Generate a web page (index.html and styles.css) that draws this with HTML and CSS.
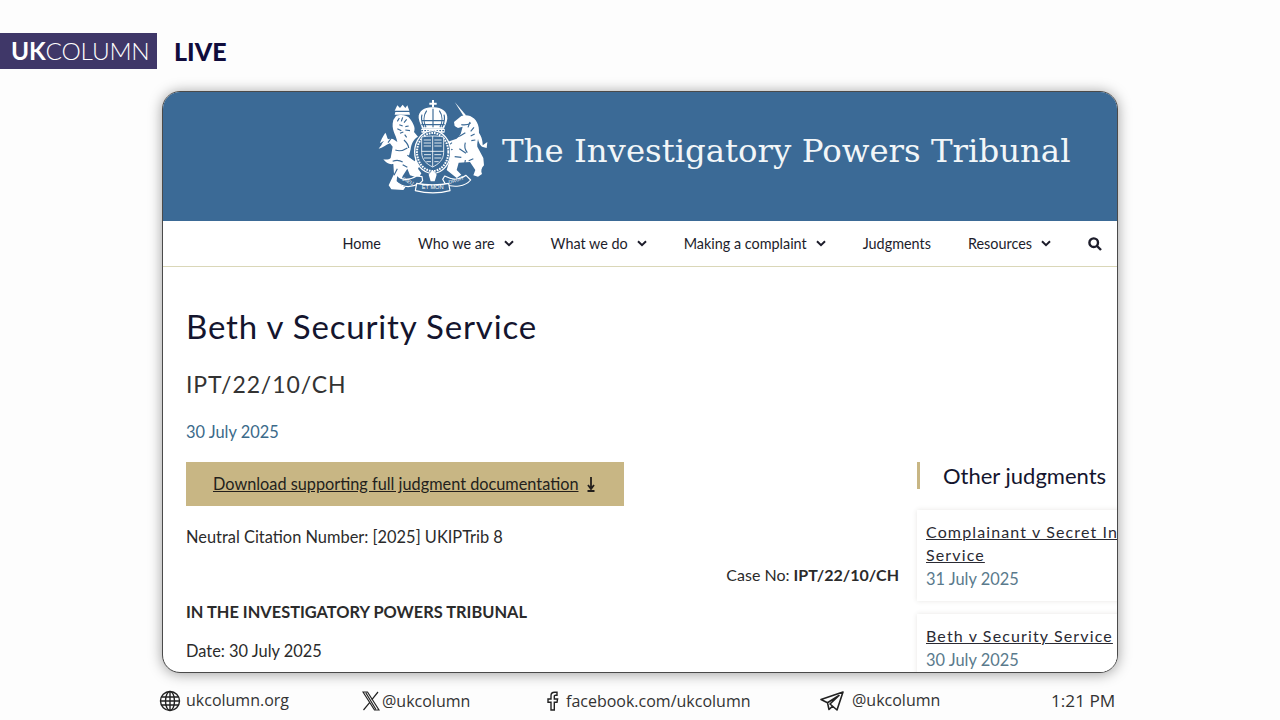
FILE: index.html
```html
<!DOCTYPE html>
<html lang="en">
<head>
<meta charset="utf-8">
<title>UK Column Live</title>
<link rel="stylesheet" href="styles.css">
</head>
<body>
<header class="brand">
  <div class="logo"><b>UK</b>COLUMN</div>
  <div class="live">LIVE</div>
</header>
<main class="window">
  <section class="banner">
    <svg class="crest" viewBox="0 0 450 330" aria-hidden="true">
      <g fill="#fff">
        <!-- lion -->
        <path d="M104 62l8-16 8 8 8-10 8 10 6-8 6 16zM106 66h42l2 8h-46z"/>
        <path d="M108 78c12-6 34-4 42 8 8 12 18 26 12 40l12 14c-14 8-20 22-22 38l-6 22 18 14 8-14 14 14-12 22 10 14-8 14-26-8-8-20-14 22-8 26 16 8-6 8-36-2-8-12 16-34-2-30c-14 2-22-4-30-14 10 2 18 0 22-4l6-34-8-10c-12 4-22 14-34 16 10-10 22-36 44-28l12 8c-4-24-20-36-12-66z"/>
        <path d="M76 128c-8 12-14 24-16 32l12-8-8 12 24-6-4-10c-4-8-4-14-8-20z"/>
        <!-- unicorn -->
        <path d="M284 36l34 40-6 4z"/>
        <path d="M304 78c24-8 48 8 52 34 4 24-6 42-4 58l18 34 2 22c-8 8-10 18-6 26l-12 8-14-4 6-16-16-24-34 2-6 22 14 14-14 10-30-24 10-34-10-18 20-10c-14-2-30-8-34-2l-10-6 10-14 22-2 22-8 12-14 6-22-14 4-10-6-2-12z"/>
        <path d="M352 124c12 10 16 28 16 42l14-10-2 18-14-4c-10-6-14-26-14-46z"/>
        <!-- crown -->
        <path d="M216 30h6v8h8v6h-8v8h-6v-8h-8v-6h8z"/>
        <path d="M176 84c-2-22 22-34 42-32 22-2 46 10 44 34-2 14-8 22-10 30h-66c-2-10-8-18-10-32z"/>
        <rect x="184" y="116" width="70" height="12" rx="2"/>
      </g>
      <g fill="none" stroke="#3b6a96" stroke-width="3.500">
        <path d="M219 56v56M200 62c-10 14-10 34-2 50M238 62c10 14 10 34 2 50M186 74c-4 12 0 26 6 38M252 74c4 12 0 26-6 38M184 92h70M184 104h70"/>
        <path d="M184 122h70" stroke-dasharray="5 4"/>
        <path d="M118 84l-6 10M128 82l-4 12M140 88l-8 10M118 104l10 4M112 116l12 6M146 108l-10 2M150 122l-14-2M120 130l10-4M134 134l6 8"/>
        <path d="M106 180c10 4 24 2 36-6M132 150c8 8 14 14 14 24M98 214c10-4 20-4 30 2M128 224l14 8M142 196l22 14M84 158l10-14M112 236l-10 20"/>
        <path d="M304 104c12 2 20 0 28-4M316 128c-12 8-24 16-38 16M322 188c-8-10-10-18-6-30M330 96l-6 16M342 112l-10 12M344 132l-12 6M346 150l-12 2M298 176l20 14M340 206l-14 6M284 200l20 2M316 210l-2 14M276 158l-10 8"/>
      </g>
      <!-- garter and shield -->
      <ellipse cx="218" cy="186" rx="54" ry="64" fill="#3b6a96" stroke="#fff" stroke-width="4"/>
      <ellipse cx="218" cy="186" rx="47" ry="57" fill="none" stroke="#fff" stroke-width="6" stroke-dasharray="5 3"/>
      <path d="M218 138c-18 0-33 3-33 3v46c0 24 17 36 33 44 16-8 33-20 33-44v-46s-15-3-33-3z" fill="#3b6a96" stroke="#fff" stroke-width="2.500"/>
      <g stroke="#fff" stroke-width="2.500" fill="none">
        <path d="M218 138v92M185 184h66"/>
        <path d="M191 150h22M191 159h22M191 168h22M223 150h22M223 159h22M223 168h22M192 194h21M192 204h21M199 215h14M223 194h21M223 204h21M223 215h13"/>
      </g>
      <!-- motto ribbons -->
      <g fill="#3b6a96" stroke="#fff" stroke-width="3.500" stroke-linejoin="round">
        <path d="M110 254c12 16 34 20 60 4l16 2 2 12-8 8c-28 14-52 14-72-6z"/>
        <path d="M254 258c30 16 48 10 64-2l14 14c-16 20-52 24-76 12l-8-14z"/>
        <path d="M170 280c28 6 70 6 96 0l4 22c-30 8-72 8-104 0z"/>
      </g>
      <path d="M206 254l12-14 12 14-6 20h-12z" fill="#fff"/>
      <g fill="#fff" font-family="'Liberation Sans', sans-serif" font-size="17">
        <text x="218" y="298" text-anchor="middle">ET MON</text>
        <text x="126" y="271" transform="rotate(24 126 271)" font-size="15">DIEU</text>
        <text x="268" y="282" transform="rotate(-18 268 282)" font-size="15">DROIT</text>
      </g>
    </svg>
    <div class="banner-title">The Investigatory Powers Tribunal</div>
  </section>
  <nav class="nav">
    <a>Home</a>
    <a>Who we are<svg class="chev" viewBox="0 0 10 7"><path d="M1 1.2l4 4 4-4"/></svg></a>
    <a>What we do<svg class="chev" viewBox="0 0 10 7"><path d="M1 1.2l4 4 4-4"/></svg></a>
    <a>Making a complaint<svg class="chev" viewBox="0 0 10 7"><path d="M1 1.2l4 4 4-4"/></svg></a>
    <a>Judgments</a>
    <a>Resources<svg class="chev" viewBox="0 0 10 7"><path d="M1 1.2l4 4 4-4"/></svg></a>
    <svg class="search" viewBox="0 0 14 14"><circle cx="5.7" cy="5.7" r="4.3"/><path d="M9 9l4 4"/></svg>
  </nav>
  <div class="content">
    <article class="main-col">
      <h1>Beth v Security Service</h1>
      <h2>IPT/22/10/CH</h2>
      <p class="date">30 July 2025</p>
      <a class="download"><span>Download supporting full judgment documentation</span><svg viewBox="0 0 10 16"><path d="M5 1v11M2 9l3 4 3-4M1.500 15h7"/></svg></a>
      <p class="citation">Neutral Citation Number: [2025] UKIPTrib 8</p>
      <p class="case">Case No: <b>IPT/22/10/CH</b></p>
      <p class="court"><b>IN THE INVESTIGATORY POWERS TRIBUNAL</b></p>
      <p class="judg-date">Date: 30 July 2025</p>
    </article>
    <aside class="side">
      <h3>Other judgments</h3>
      <div class="card">
        <a>Complainant v Secret Intelligence Service</a>
        <time>31 July 2025</time>
      </div>
      <div class="card">
        <a>Beth v Security Service</a>
        <time>30 July 2025</time>
      </div>
    </aside>
  </div>
</main>
<footer class="foot">
  <div class="item">
    <svg class="ico globe" viewBox="0 0 22 22"><circle cx="11" cy="11" r="9.500"/><ellipse cx="11" cy="11" rx="4.500" ry="9.500"/><path d="M11 1.500v19M2.500 7h17M2.500 15h17M1.500 11h19"/></svg>
    <span class="raised">ukcolumn.org</span>
  </div>
  <div class="item x">
    <svg class="ico xicon" viewBox="0 0 18 20"><path d="M1 1h4.500l11.500 18h-4.500zM3.800 1.800l10 16.400M16 1l-6.300 7.800M7.800 11.300L1.500 19"/></svg>
    <span>@ukcolumn</span>
  </div>
  <div class="item fb">
    <svg class="ico ficon" viewBox="0 0 14 20"><path d="M12 1.200H9.500C7.500 1.200 6 2.700 6 4.700V8H3v3.300h3V19h3.300v-7.700H12l.6-3.300H9.300V5.300c0-.6.500-1 1-1H12z"/></svg>
    <span>facebook.com/ukcolumn</span>
  </div>
  <div class="item tg">
    <svg class="ico ticon" viewBox="0 0 24 20"><path d="M23 1L1 8.500l6.500 3.200L19 4.500 10 13l7 6zM7.500 11.700L9 18.500l3.700-3.300"/></svg>
    <span class="raised">@ukcolumn</span>
  </div>
  <div class="time">1:21 PM</div>
</footer>
</body>
</html>
```
FILE: styles.css
```css
* { box-sizing: border-box; }
html, body { margin: 0; height: 720px; overflow: hidden; }
body { background: #fdfdfd; font-family: Lato, sans-serif; color: #2b2b2b; }

.brand { display: flex; align-items: center; height: 36px; margin-top: 33px; }
.logo { width: 157px; height: 36px; background: #3f3768; color: #fff; font-size: 24.400px; font-weight: 300; line-height: 36px; padding-left: 11px; letter-spacing: -.2px; white-space: nowrap; }
.logo b { font-weight: 700; }
.live { margin-left: 17px; font-size: 25px; font-weight: 900; color: #100c3c; }

.window { width: 956px; height: 582px; margin: 22px 0 0 162px; border: 1px solid #4a4a4a; border-radius: 18px; overflow: hidden; background: #fff; box-shadow: 0 1px 14px rgba(0, 0, 0, .38); }
.banner { height: 129px; background: #3b6a96; display: flex; align-items: center; padding-left: 197px; }
.crest { width: 150px; height: 110px; align-self: flex-start; margin-top: -2px; flex: none; }
.banner-title { margin: 0 0 12px -8px; font-family: "DejaVu Serif", serif; font-size: 32.400px; color: #f2f6f8; white-space: nowrap; }

.nav { height: 46px; border-bottom: 1px solid #dad7b8; display: flex; align-items: center; justify-content: flex-end; gap: 37px; padding-right: 15px; font-size: 14.400px; color: #1d1d2b; }
.nav a { display: flex; align-items: center; }
.chev { width: 10px; height: 7px; margin-left: 9px; fill: none; stroke: #1d1d2b; stroke-width: 2; }
.search { width: 14px; height: 14px; fill: none; stroke: #1d1d2b; stroke-width: 2.400; }

.content { display: grid; grid-template-columns: 713px 1fr; column-gap: 18px; padding-left: 23px; height: 406px; overflow: hidden; }
.main-col { padding-top: 37px; font-size: 16.400px; }
h1 { margin: 0; font-size: 33px; font-weight: 400; letter-spacing: .83px; line-height: 44px; color: #14152e; }
h2 { margin: 20px 0 0; font-size: 23px; font-weight: 400; letter-spacing: .9px; line-height: 32px; color: #333; }
.date { margin: 20px 0 0; line-height: 24px; color: #3b6a8a; }
.download { display: flex; align-items: center; width: 438px; height: 44px; margin-top: 18px; padding: 0 0 1px 27px; background: #c8b684; color: #231f1c; font-size: 16.300px; }
.download span { text-decoration: underline; }
.download svg { width: 10px; height: 16px; margin-left: 8px; fill: none; stroke: #231f1c; stroke-width: 1.800; }
.citation { margin: 19px 0 0; line-height: 24px; }
.case { margin: 14px 0 0; font-size: 16px; line-height: 24px; text-align: right; }
.court { margin: 13px 0 0; line-height: 24px; }
.judg-date { margin: 15px 0 0; line-height: 24px; }

.side { padding-top: 195px; min-width: 0; }
h3 { margin: 0; height: 27px; border-left: 3px solid #c8b684; padding-left: 23px; font-size: 22px; font-weight: 400; line-height: 27px; color: #14152e; white-space: nowrap; }
.card { width: 320px; margin-top: 21px; padding: 10px 9px; background: #fff; box-shadow: 0 0 5px rgba(60, 50, 30, .12); }
.card + .card { margin-top: 13px; }
.card a { display: block; font-size: 16px; line-height: 23px; letter-spacing: 1.130px; text-decoration: underline; color: #2a2a33; }
.card time { display: block; margin-top: 1px; font-size: 16.400px; line-height: 24px; color: #5a7a8c; }

.foot { display: grid; grid-template-columns: 203px 183px 275px 231px 64px; margin: 16px 0 0 159px; font-family: "Open Sans", sans-serif; font-size: 16px; color: #333; height: 22px; align-items: center; }
.item { display: flex; align-items: center; white-space: nowrap; }
.raised { padding-bottom: 2px; }
.ico { flex: none; fill: none; stroke: #222; }
.globe { width: 22px; height: 22px; margin-right: 5px; stroke-width: 1.400; }
.xicon { width: 18px; height: 20px; margin-right: 2px; stroke-width: 1.200; }
.ficon { width: 14px; height: 20px; margin-right: 7px; stroke-width: 1.400; }
.ticon { width: 24px; height: 20px; margin-right: 8px; stroke-width: 1.600; stroke-linejoin: round; }
.time { font-size: 17.200px; white-space: nowrap; padding-bottom: 1px; }
```
